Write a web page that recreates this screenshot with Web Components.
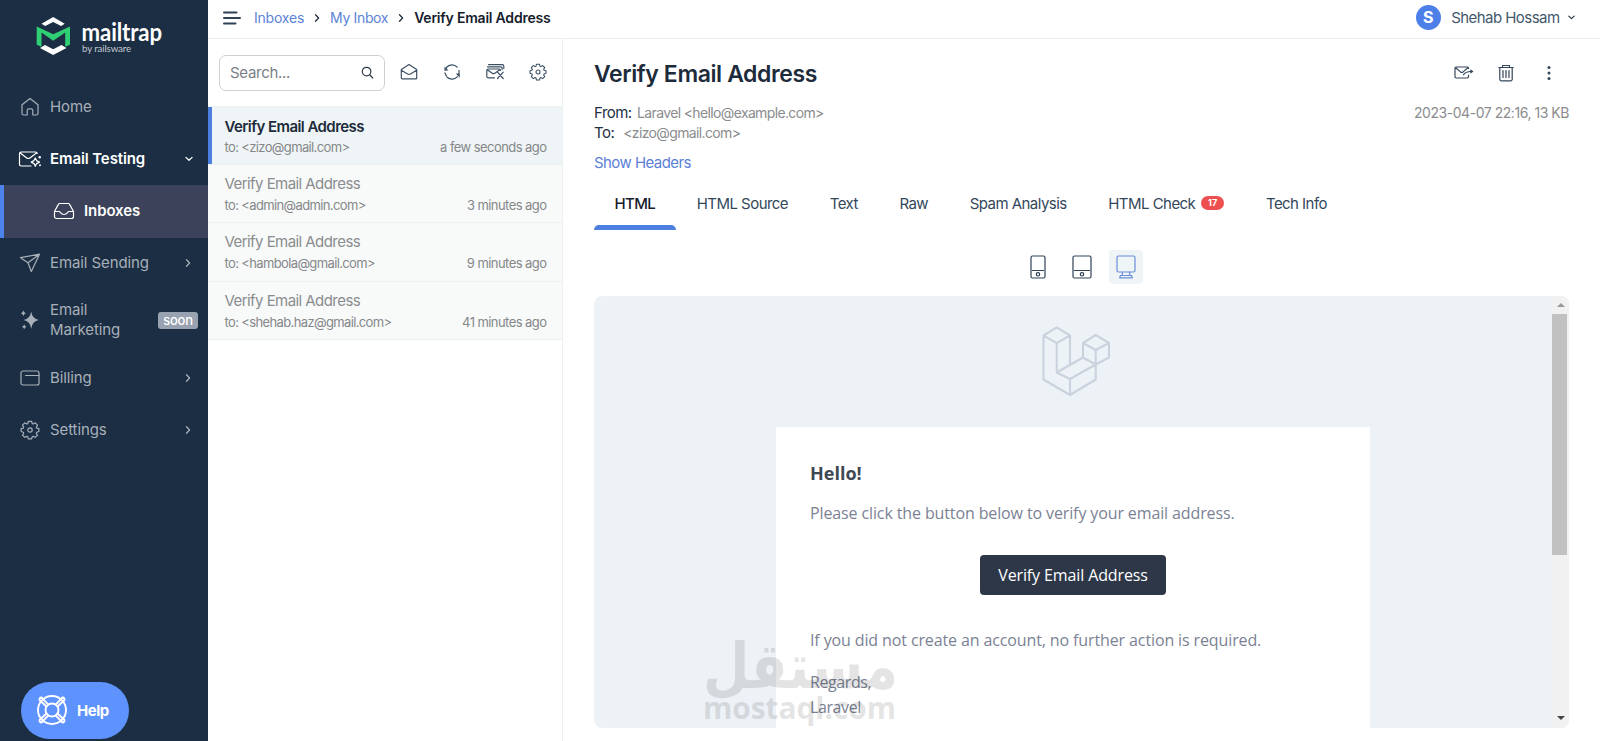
<!DOCTYPE html>
<html lang="en">
<head>
<meta charset="utf-8">
<title>Verify Email Address</title>
<style>
  html, body { margin: 0; height: 100%; }
  body {
    font-family: Inter, "Liberation Sans", sans-serif;
    font-size: 15px;
    color: #22303f;
    background: #fff;
    overflow: hidden;
  }
</style>
</head>
<body>
<mail-app></mail-app>

<script>
/** Markup of every icon, keyed by name. Each entry: [viewBox, content] */
const ICONS = {
  home: ['0 0 20 20', '<path d="M2 7.8 10 1.5l8 6.3v8.4a1.8 1.8 0 0 1-1.8 1.8h-3.4v-4.6a1.5 1.5 0 0 0-1.5-1.5H8.7a1.5 1.5 0 0 0-1.5 1.5V18H3.8A1.8 1.8 0 0 1 2 16.2z"/>'],
  testing: ['0 0 24 18', '<path d="M13 16H3.2a1.7 1.7 0 0 1-1.7-1.7V3.7A1.7 1.7 0 0 1 3.2 2h14.3a1.7 1.7 0 0 1 1.7 1.5M2 2.8l6.7 5.1q1.6 1.2 3.2 0l6.8-5.1"/><path d="M17.3 8l1.3 2.6 2.9 1.5-2.9 1.5-1.3 2.7-1.3-2.7-2.8-1.500 2.800-1.500z"/><circle cx="21.7" cy="7.3" r=".7"/><circle cx="22" cy="15.3" r=".4"/>'],
  tray: ['0 0 22 20', '<path d="M1.5 10.500 5.200 3.600A2 2 0 0 1 7 2.500h8a2 2 0 0 1 1.800 1.100l3.700 6.900v5a2 2 0 0 1-2 2h-15a2 2 0 0 1-2-2zM1.500 10.500h4.400c1.800 0 1.500 3 5.100 3s3.300-3 5.100-3h4.400"/>'],
  plane: ['0 0 22 20', '<path d="M1.5 4.7 20.5 1.2 12.3 18.5 9 9.7zM9 9.7 20.5 1.2"/>'],
  sparkle: ['0 0 20 20', '<g fill="currentColor" stroke="none"><path d="M11.2 1.500q1 7.300 7.600 8.600-6.600 1.300-7.600 8.600-1-7.300-7.600-8.600 6.600-1.300 7.600-8.600z"/><path d="M3.4.6q.4 2.200 2.500 2.700-2.100.5-2.500 2.700Q3 3.800.9 3.300 3 2.800 3.400.6zM4.200 14.200q.4 2 2.300 2.500-1.900.5-2.300 2.500-.4-2-2.300-2.500 1.900-.5 2.300-2.500z"/></g>'],
  card: ['0 0 20 16', '<rect x="1" y="1" width="18" height="14" rx="2"/><path d="M5.5 5.5H19"/>'],
  gear: ['0 0 20 20', '<path d="M8.3 1.3h3.4l.5 2.3 1 .4 2-1.2 2.3 2.3-1.2 2 .4 1 2.2.6v2.8l-2.2.7-.4 1 1.2 2-2.3 2.2-2-1.2-1 .5-.5 2.2H8.3l-.5-2.2-1-.5-2 1.2-2.3-2.2 1.2-2-.4-1-2.2-.7V8.7l2.2-.6.4-1-1.2-2L4.8 2.8l2 1.2 1-.4z"/><circle cx="10" cy="10" r="2.2"/>'],
  right: ['0 0 8 10', '<path d="M2.5 1.8 5.6 5 2.5 8.2"/>'],
  down: ['0 0 10 8', '<path d="M1.9 2.4 5 5.3l3.1-2.9"/>'],
  menu: ['0 0 18 14', '<path d="M1 1.5h12.5M1 7h16M1 12.5h11.5"/>'],
  search: ['0 0 14 14', '<circle cx="6" cy="6" r="4.6"/><path d="m9.4 9.4 3.3 3.5"/>'],
  open: ['0 0 18 18', '<path d="M1.3 6.5 9 1.6l7.7 4.9v8.4a1 1 0 0 1-1 1H2.3a1 1 0 0 1-1-1zM1.3 7.3 7.6 11q1.4.8 2.8 0l6.3-3.7"/>'],
  refresh: ['0 0 18 18', '<path d="M2.2 7.2A7 7 0 0 1 14.2 4.2M16 7.4a7 7 0 0 1-.6 4.4M2 9.8A7 7 0 0 0 3.5 13M4.2 14.2a7 7 0 0 0 10.2-.6"/><path d="M1.5 3.4v4h4zM16.8 14.8v-4.2h-4z" fill="currentColor" stroke="none"/>'],
  clear: ['0 0 20 18', '<path d="M9.5 14.8H3.3a1.5 1.5 0 0 1-1.5-1.5V7.5A1.5 1.5 0 0 1 3.3 6H14a1.5 1.5 0 0 1 1.5 1.3M2.3 6.7l4.9 3.5q1.3.9 2.6 0L14.7 6.7M2.5 3.8h13.1a1.6 1.6 0 0 1 1.6 1.6v1.2M3.5 1.6h13.7a1.6 1.6 0 0 1 1.6 1.6v2.2M12.5 9.2l5.7 6.3M18.2 9.2l-5.7 6.3"/>'],
  forward: ['0 0 20 16', '<path d="M14.5 3.500v-.3A1.200 1.200 0 0 0 13.300 2H2.200A1.200 1.200 0 0 0 1 3.200v8.600A1.200 1.200 0 0 0 2.200 13h11.100a1.200 1.200 0 0 0 1.200-1.200V10M1.600 2.700l4.900 4.200q1.300 1 2.600 0l4.800-4.200M9.500 9.800q2-3.300 7.500-3.300"/><path d="M16.3 4.2v4.6l3.2-2.3z" fill="currentColor" stroke="none"/>'],
  trash: ['0 0 16 18', '<path d="M.8 3.5h14.4M4.5 3.3V1.5h7v1.8M1.8 3.8v11.4a1.6 1.6 0 0 0 1.6 1.6h9.2a1.6 1.6 0 0 0 1.6-1.6V3.8M5 6.5v7M8 6.5v7M11 6.5v7"/>'],
  more: ['0 0 6 16', '<g fill="currentColor" stroke="none"><circle cx="3" cy="2.5" r="1.5"/><circle cx="3" cy="8" r="1.5"/><circle cx="3" cy="13.5" r="1.5"/></g>'],
  phone: ['0 0 16 24', '<rect x="1" y="1" width="14" height="22" rx="1.5"/><path d="M2.5 15.5h11"/><circle cx="8" cy="19.3" r="1.7"/>'],
  tablet: ['0 0 20 24', '<rect x="1" y="1" width="18" height="22" rx="1.5"/><path d="M2.5 15.5h15"/><circle cx="10" cy="19.3" r="1.7"/>'],
  desktop: ['0 0 20 24', '<rect x="1" y="1" width="18" height="16" rx="1.5"/><path d="M6.3 17v3.5M13.7 17v3.5M4.5 20.5h11l.8 2.3H3.7z"/>'],
  buoy: ['0 0 32 32', '<circle cx="16" cy="16" r="14"/><circle cx="16" cy="16" r="6.5"/><path d="M5.5 3.5l6.6 6.9M3.5 6l6.9 6.5M26.5 3.5l-6.6 6.9M28.5 6l-6.9 6.5M5.5 28.5l6.6-6.9M3.5 26l6.9-6.5M26.5 28.5l-6.6-6.9M28.5 26l-6.9-6.5M5.5 3.5Q3.5 3.5 3.5 6M26.5 3.5q2 0 2 2.5M5.5 28.5q-2 0-2-2.5M26.5 28.5q2 0 2-2.5"/>'],
  laravel: ['0 0 68 70', '<path d="M1.5 9.5 14.7 1.3 28 9.5V39M1.5 9.5v44L28 69l25.7-15.5v-15M1.5 9.5l13.2 7.7L28 9.5M14.7 17.2v29.3L41 31.5M14.7 46.5 28 53M28 53v16M28 53l25.7-14.5L67 31.5V17L53.7 9 41 17v14.5l12.7 7V24L67 17M41 17l12.7 7"/>']
};

/** Base class: renders the string of render() into an open shadow root */
class BaseElement extends HTMLElement {
  constructor() {
    super();
    this.attachShadow({ mode: 'open' });
  }

  connectedCallback() {
    this.shadowRoot.innerHTML = this.render();
  }

  attr(name, fallback = '') {
    return this.getAttribute(name) ?? fallback;
  }
}

/** <mt-icon name w h stroke> */
class MtIcon extends BaseElement {
  render() {
    const [box, content] = ICONS[this.attr('name')];
    return `
      <style>
        :host { display: inline-flex; flex: none; }
        svg { display: block; overflow: visible; fill: none; stroke: currentColor;
          stroke-width: ${this.attr('stroke', '1.2')}; stroke-linecap: round; stroke-linejoin: round; }
      </style>
      <svg width="${this.attr('w', 20)}" height="${this.attr('h', 20)}" viewBox="${box}">${content}</svg>`;
  }
}

class BrandLogo extends BaseElement {
  render() {
    return `
      <style>
        :host { display: block; height: 81px; box-sizing: border-box; padding: 15px 0 0 35px; }
        svg { display: block; font-family: Lato, sans-serif; }
      </style>
      <svg width="130" height="42" viewBox="0 0 130 42">
        <path d="M6.5 8.7 18.2 2l11.5 6.7-3.6 2.2L18.2 7l-8 3.9z" fill="#fff"/>
        <path d="M5 33l5-3 8.2 4.2 8.2-4.2 5.1 3L18.2 40z" fill="#fff"/>
        <path d="M1.7 11.5 18.2 19.3 35 11.5v18.3l-4.8 2V17.6L18.2 25.8 6.5 17.6v14.2l-4.8-2z" fill="#2fd073"/>
        <text x="46.5" y="26.3" font-size="24" font-weight="700" fill="#fff" textLength="80.5" lengthAdjust="spacingAndGlyphs">mailtrap</text>
        <text x="47" y="36.5" font-size="8.5" fill="#c3cad2" textLength="49" lengthAdjust="spacingAndGlyphs">by railsware</text>
      </svg>`;
  }
}

/** <nav-item icon arrow badge bold sub> label </nav-item> */
class NavItem extends BaseElement {
  render() {
    const arrow = this.attr('arrow');
    const badge = this.attr('badge');
    return `
      <style>
        :host { display: flex; align-items: center; box-sizing: border-box; height: 52px;
          padding: 0 14px 0 18px; color: #a8b0ba; line-height: 20px; }
        :host([bold]) { color: #fff; font-weight: 600; }
        :host([sub]) { height: 53px; padding: 0 14px 1px 48px; background: #3b4259;
          box-shadow: inset 4px 0 #4d84ec; }
        :host([badge]) { height: 63px; padding-right: 10px; }
        .icon { display: flex; justify-content: center; width: 24px; margin-right: 8px; }
        :host([sub]) .icon { width: 32px; margin-right: 4px; }
        .label { flex: 1; }
        .badge { box-sizing: border-box; width: 40px; height: 17px; border-radius: 3px; background: #98a2b1;
          color: #fff; font-size: 13px; line-height: 16px; font-weight: 500; text-align: center; letter-spacing: -.2px; }
      </style>
      <span class="icon"><mt-icon name="${this.attr('icon')}" w="${this.attr('w', 20)}" h="${this.attr('h', 20)}"></mt-icon></span>
      <span class="label"><slot></slot></span>
      ${arrow === 'right' ? '<mt-icon name="right" w="8" h="10" stroke="1.3" style="margin-right:2px"></mt-icon>' : ''}
      ${arrow === 'down' ? '<mt-icon name="down" w="10" h="8" stroke="1.3"></mt-icon>' : ''}
      ${badge ? `<span class="badge">${badge}</span>` : ''}`;
  }
}

class HelpButton extends BaseElement {
  render() {
    return `
      <style>
        :host { position: absolute; left: 21px; top: 682px; display: flex; align-items: center; box-sizing: border-box;
          width: 108px; height: 57px; padding: 0 0 1px 15px; gap: 9px; border-radius: 29px;
          background: #5e92fd; color: #fff; font-weight: 700; font-size: 15px; letter-spacing: -.5px; }
      </style>
      <mt-icon name="buoy" w="32" h="32" stroke="1.9"></mt-icon><slot></slot>`;
  }
}

class SideBar extends BaseElement {
  render() {
    return `
      <style>
        :host { display: flex; flex-direction: column; width: 208px; flex: none; background: #1b2e43; letter-spacing: -.1px; }
        nav-item[icon="plane"] { height: 50px; }
        nav-item[icon="sparkle"] { height: 64px; }
      </style>
      <brand-logo></brand-logo>
      <nav-item icon="home">Home</nav-item>
      <nav-item icon="testing" arrow="down" w="24" h="18" bold>Email Testing</nav-item>
      <nav-item icon="tray" w="22" h="20" bold sub>Inboxes</nav-item>
      <nav-item icon="plane" w="22" h="20" arrow="right">Email Sending</nav-item>
      <nav-item icon="sparkle" badge="soon">Email Marketing</nav-item>
      <nav-item icon="card" w="20" h="16" arrow="right">Billing</nav-item>
      <nav-item icon="gear" arrow="right">Settings</nav-item>
      <help-button>Help</help-button>`;
  }
}

class TopBar extends BaseElement {
  render() {
    return `
      <style>
        :host { display: flex; align-items: center; box-sizing: border-box; height: 39px; padding: 0 24px 3px 15px;
          border-bottom: 1px solid #ebeeef; font-size: 14px; }
        .crumbs { display: flex; align-items: center; margin-left: 13px; flex: 1; letter-spacing: -.21px; }
        .crumbs mt-icon { margin: 0 9px; }
        a { color: #5b83d8; }
        b { font-weight: 600; color: #16202c; }
        .avatar { width: 25px; height: 25px; border-radius: 50%; background: #4d7fe8; color: #fff;
          font-weight: 700; font-size: 16px; line-height: 25px; text-align: center; margin-right: 10.5px; }
        .user { color: #44586b; font-size: 15px; letter-spacing: -.55px; margin-right: 7.5px; }
      </style>
      <mt-icon name="menu" w="18" h="14" stroke="2" style="color:#2f4256"></mt-icon>
      <div class="crumbs">
        <a>Inboxes</a><mt-icon name="right" w="8" h="10" stroke="1.3"></mt-icon>
        <a style="letter-spacing:-.35px">My Inbox</a><mt-icon name="right" w="8" h="10" stroke="1.3"></mt-icon>
        <b>Verify Email Address</b>
      </div>
      <span class="avatar">S</span><span class="user">Shehab Hossam</span>
      <mt-icon name="down" w="9" h="7" stroke="1.3"></mt-icon>`;
  }
}

/** <message-row to time selected> subject </message-row> */
class MessageRow extends BaseElement {
  render() {
    return `
      <style>
        :host { display: flex; flex-direction: column; box-sizing: border-box; height: 58.2px; padding: 8px 15.5px 0 16.5px;
          background: #f8fafa; border-bottom: 1px solid #edf0f1; color: #8a8c8e; letter-spacing: -.56px; }
        :host([selected]) { padding-top: 9px; background: #eff5f6; box-shadow: inset 4px 0 #4d7fe0; }
        .title { line-height: 21px; font-size: 15px; }
        :host([selected]) .title { font-weight: 600; color: #1d2b3b; }
        .meta { display: flex; justify-content: space-between; line-height: 23px; font-size: 13px; color: #858789; }
        .to { letter-spacing: -.63px; }
        :host([selected]) .meta { line-height: 21px; }
      </style>
      <div class="title"><slot></slot></div>
      <div class="meta"><span class="to">to: &lt;${this.attr('to')}&gt;</span><span>${this.attr('time')}</span></div>`;
  }
}

class InboxList extends BaseElement {
  render() {
    return `
      <style>
        :host { display: flex; flex-direction: column; box-sizing: border-box; width: 355px; flex: none; border-right: 1px solid #edf0f1; }
        .tools { display: flex; align-items: center; height: 68px; box-sizing: border-box; padding: 0 0 0 11px;
          gap: 23px; color: #3c5064; border-bottom: 1px solid #edf1f2; }
        .search { display: flex; align-items: center; justify-content: space-between; box-sizing: border-box;
          width: 166px; height: 36px; margin-right: -9px; padding: 0 10px; border: 1px solid #ccd0d5; border-radius: 7px;
          color: #7a8087; letter-spacing: -.3px; }
        .search mt-icon { color: #2c3a48; }
        .tool { display: flex; justify-content: center; width: 20px; padding-bottom: 1px; }
      </style>
      <div class="tools">
        <div class="search"><span>Search...</span><mt-icon name="search" w="13" h="13" stroke="1.3"></mt-icon></div>
        <span class="tool"><mt-icon name="open" w="18" h="18"></mt-icon></span>
        <span class="tool"><mt-icon name="refresh" w="18" h="18"></mt-icon></span>
        <span class="tool"><mt-icon name="clear" w="20" h="18"></mt-icon></span>
        <span class="tool"><mt-icon name="gear" w="18" h="18"></mt-icon></span>
      </div>
      <message-row to="zizo@gmail.com" time="a few seconds ago" selected>Verify Email Address</message-row>
      <message-row to="admin@admin.com" time="3 minutes ago">Verify Email Address</message-row>
      <message-row to="hambola@gmail.com" time="9 minutes ago">Verify Email Address</message-row>
      <message-row to="shehab.haz@gmail.com" time="41 minutes ago">Verify Email Address</message-row>`;
  }
}

/** <tab-item selected count> label </tab-item> */
class TabItem extends BaseElement {
  render() {
    const count = this.attr('count');
    return `
      <style>
        :host { display: flex; flex-direction: column; height: 52px; font-size: 15px;
          letter-spacing: -.54px; color: #33475a; white-space: nowrap; }
        .label { display: flex; align-items: center; height: 47px; box-sizing: border-box; padding: 3px 21px 0 20.6px; }
        .bar { height: 5px; border-radius: 5px 5px 0 0; }
        :host([selected]) { color: #16202c; font-weight: 500; letter-spacing: -.65px; }
        :host([selected]) .bar { background: #4d7fe0; }
        .count { margin-left: 5.5px; width: 23.5px; height: 14px; border-radius: 7px; background: #ee4f50; color: #fff;
          font-size: 9px; font-weight: 700; line-height: 14px; text-align: center; letter-spacing: 0; }
      </style>
      <div class="label"><slot></slot>${count ? `<span class="count">${count}</span>` : ''}</div>
      <div class="bar"></div>`;
  }
}

/** The rendered HTML mail with its own scrollbar */
class MailPreview extends BaseElement {
  render() {
    return `
      <style>
        :host { display: flex; height: 432px; border-radius: 8px; overflow: hidden; background: #edf2f7;
          font-family: "Open Sans", sans-serif; font-size: 16px; color: #7b8294; letter-spacing: -.12px; }
        .page { flex: 1; display: flex; flex-direction: column; align-items: center; padding-top: 30px; }
        .page > mt-icon { color: #cbd2de; margin-left: 6px; }
        .sheet { box-sizing: border-box; width: 594px; flex: 1; margin-top: 31px; padding: 33px 34px 0; background: #fff; }
        h1 { margin: 0; font-size: 18px; line-height: 27px; color: #3d4852; font-weight: 700; letter-spacing: 0; }
        p { margin: 0; line-height: 25px; }
        .button { display: block; width: 186px; height: 40px; margin: 29.5px auto 32.5px; border-radius: 4px;
          background: #2d3748; color: #fff; line-height: 41px; text-align: center; }
        .sign { margin-top: 17px; letter-spacing: -.4px; }
        .scroll { width: 17px; display: flex; flex-direction: column; background: #f1f1f1; align-items: center; }
        .scroll i { width: 0; border: 4px solid transparent; border-top: 0; border-bottom: 4px solid #999; margin: 7px 0; }
        .scroll i.end { border-bottom: 0; border-top: 4px solid #444; margin: auto 0 8px; }
        .thumb { width: 15px; height: 241px; background: #c1c1c1; margin-right: 2px; }
      </style>
      <div class="page">
        <mt-icon name="laravel" w="68" h="70" stroke="2.1"></mt-icon>
        <div class="sheet">
          <h1>Hello!</h1>
          <p style="margin-top:13.5px">Please click the button below to verify your email address.</p>
          <span class="button">Verify Email Address</span>
          <p>If you did not create an account, no further action is required.</p>
          <p class="sign">Regards,<br>Laravel</p>
        </div>
      </div>
      <div class="scroll"><i></i><div class="thumb"></div><i class="end"></i></div>`;
  }
}

class MessageView extends BaseElement {
  render() {
    return `
      <style>
        :host { flex: 1; display: flex; flex-direction: column; padding: 19px 31px 0 31px; }
        .row { display: flex; justify-content: space-between; }
        h2 { margin: 0; font-size: 23px; line-height: 32px; font-weight: 600; color: #1d2b3b; letter-spacing: -.4px; }
        .actions { display: flex; align-items: center; gap: 24px; padding: 0 17.5px 2px 0; color: #34475a; }
        .info { margin-top: 13px; line-height: 20px; font-size: 14px; color: #8a8c8e; letter-spacing: -.64px; }
        .info b { font-weight: 400; font-size: 15px; color: #22303f; margin-right: 5.5px; letter-spacing: -.54px; }
        .info .to b { margin-right: 9px; }
        .date { letter-spacing: -.46px; }
        .link { margin-top: 10px; line-height: 20px; color: #5b7fd6; letter-spacing: -.56px; }
        .tabs { display: flex; margin-top: 5px; height: 52px; }
        .devices { display: flex; justify-content: center; align-items: center; height: 34px; margin: 20px 0 12px; color: #2f4256; }
        .devices span { display: flex; align-items: center; justify-content: center; width: 34px; height: 34px; border-radius: 4px; margin: 0 5px; }
        .devices .on { background: #eff5f6; color: #6a8ed8; }
      </style>
      <div class="row">
        <h2>Verify Email Address</h2>
        <div class="actions">
          <mt-icon name="forward" w="20" h="16"></mt-icon>
          <mt-icon name="trash" w="16" h="18"></mt-icon>
          <mt-icon name="more" w="6" h="16" style="margin-left:7.5px"></mt-icon>
        </div>
      </div>
      <div class="row info">
        <div>
          <div><b>From:</b><span>Laravel &lt;hello@example.com&gt;</span></div>
          <div class="to"><b>To:</b><span>&lt;zizo@gmail.com&gt;</span></div>
        </div>
        <span class="date">2023-04-07 22:16, 13 KB</span>
      </div>
      <div class="link"><span>Show Headers</span></div>
      <div class="tabs">
        <tab-item selected>HTML</tab-item>
        <tab-item>HTML Source</tab-item>
        <tab-item>Text</tab-item>
        <tab-item>Raw</tab-item>
        <tab-item>Spam Analysis</tab-item>
        <tab-item count="17">HTML Check</tab-item>
        <tab-item>Tech Info</tab-item>
      </div>
      <div class="devices">
        <span><mt-icon name="phone" w="16" h="24"></mt-icon></span>
        <span><mt-icon name="tablet" w="20" h="24"></mt-icon></span>
        <span class="on"><mt-icon name="desktop" w="20" h="24"></mt-icon></span>
      </div>
      <mail-preview></mail-preview>`;
  }
}

/** Translucent stamp over the page */
class WaterMark extends BaseElement {
  render() {
    return `
      <style>
        :host { position: absolute; left: 700px; top: 630px; opacity: .11; pointer-events: none; }
        svg { display: block; overflow: visible; }
      </style>
      <svg width="200" height="100" viewBox="0 0 200 100" fill="#111" font-weight="700">
        <text x="198" y="58" direction="rtl" font-family="DejaVu Sans" font-size="63" textLength="195" lengthAdjust="spacingAndGlyphs">مستقل</text>
        <text x="3" y="89" font-family="Open Sans" font-size="31" textLength="193" lengthAdjust="spacingAndGlyphs">mostaql.com</text>
      </svg>`;
  }
}

class MailApp extends BaseElement {
  render() {
    return `
      <style>
        :host { display: flex; width: 1600px; height: 741px; position: relative; overflow: hidden; }
        .main { flex: 1; display: flex; flex-direction: column; }
        .body { flex: 1; display: flex; min-height: 0; }
      </style>
      <side-bar></side-bar>
      <div class="main">
        <top-bar></top-bar>
        <div class="body">
          <inbox-list></inbox-list>
          <message-view></message-view>
        </div>
      </div>
      <water-mark></water-mark>`;
  }
}

customElements.define('mt-icon', MtIcon);
customElements.define('brand-logo', BrandLogo);
customElements.define('nav-item', NavItem);
customElements.define('help-button', HelpButton);
customElements.define('side-bar', SideBar);
customElements.define('top-bar', TopBar);
customElements.define('message-row', MessageRow);
customElements.define('inbox-list', InboxList);
customElements.define('tab-item', TabItem);
customElements.define('mail-preview', MailPreview);
customElements.define('message-view', MessageView);
customElements.define('water-mark', WaterMark);
customElements.define('mail-app', MailApp);
</script>
</body>
</html>
